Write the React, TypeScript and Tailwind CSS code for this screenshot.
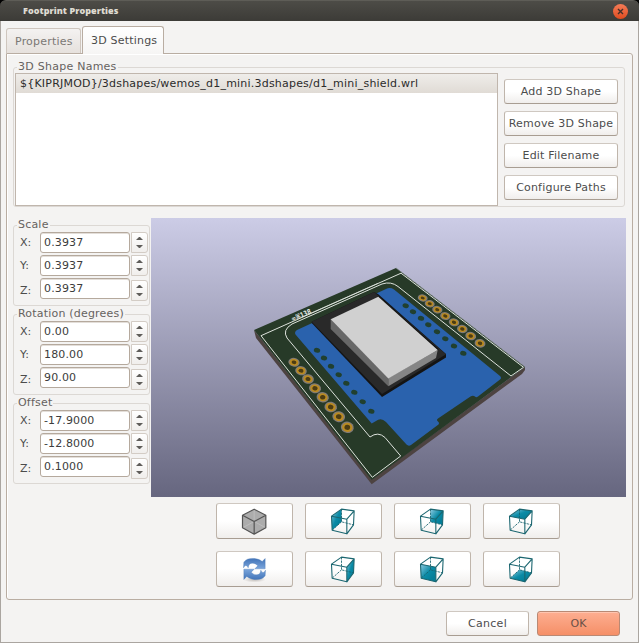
import React from "react";

type Face = "left" | "back" | "top" | "right" | "front" | "bottom";

const faces: Record<Face, string> = {
  left: "-36,-16 -6,-37 -6,1 -34,26",
  back: "-6,-37 32,-32 30,10 -6,1",
  top: "-36,-16 -6,-37 32,-32 10,-7",
  right: "10,-7 32,-32 30,10 10,37",
  front: "-36,-16 10,-7 10,37 -34,26",
  bottom: "-6,1 30,10 10,37 -34,26",
};

function WireCube({ face }: { face: Face }) {
  const id = `fill-${face}`;
  return (
    <svg width="27" height="29" viewBox="-40.5 -43.5 81 87">
      <defs>
        <linearGradient id={id} x1="0" y1="0" x2="0.8" y2="0.8">
          <stop offset="0" stopColor="#8ecbe2" />
          <stop offset="0.6" stopColor="#0b8ba6" />
          <stop offset="1" stopColor="#047e98" />
        </linearGradient>
      </defs>
      <polygon points={faces[face]} fill={`url(#${id})`} />
      <path d="M-6 -37V1L30 10M-6 1L-34 26" fill="none" stroke="#17636e" strokeWidth="2.6" strokeDasharray="7 3" />
      <path
        d="M-36 -16L-6 -37L32 -32L30 10L10 37L-34 26ZM-36 -16L10 -7V37M10 -7L32 -32"
        fill="none"
        stroke="#1b6670"
        strokeWidth="3.3"
        strokeLinejoin="round"
      />
    </svg>
  );
}

function SolidCube() {
  return (
    <svg width="27" height="29" viewBox="-40.5 -43.5 81 87">
      <path d="M-1 -37L34 -19V19L-1 38L-36 19V-19Z" fill="#acacac" />
      <path d="M-1 0L-36 19M-1 0L34 19M-1 -37V0" stroke="#c6c6c6" strokeWidth="2" />
      <path
        d="M-1 -37L34 -19V19L-1 38L-36 19V-19ZM-36 -19L-1 0L34 -19M-1 0V38"
        fill="none"
        stroke="#545454"
        strokeWidth="3.6"
        strokeLinejoin="round"
      />
    </svg>
  );
}

function RefreshIcon() {
  const arrow =
    "M-33 -5L-32 -22C-25 -32 -14 -34 0 -33C11 -32 18 -28 23 -24L32 -33V-2H1L10 -11C2 -20 -9 -21 -15 -16C-18 -12 -18 -9 -19 -5C-21 -10 -24 -12 -26 -12C-29 -12 -31 -8 -33 -5Z";
  return (
    <svg width="27" height="29" viewBox="-40.5 -43.5 81 87">
      <defs>
        <linearGradient id="refresh" x1="0" y1="0" x2="0" y2="1">
          <stop offset="0" stopColor="#4274b8" />
          <stop offset="1" stopColor="#7ba6dc" />
        </linearGradient>
        <radialGradient id="refresh-shadow">
          <stop offset="0" stopColor="#9a938c" stopOpacity="0.6" />
          <stop offset="1" stopColor="#9a938c" stopOpacity="0" />
        </radialGradient>
      </defs>
      <ellipse cx="0" cy="30" rx="34" ry="9" fill="url(#refresh-shadow)" />
      <g fill="url(#refresh)" stroke="#3f70b0" strokeWidth="1" strokeLinejoin="round">
        <path d={arrow} />
        <path d={arrow} transform="rotate(180 0 -1.5)" />
      </g>
    </svg>
  );
}

const leftPads = [[294, 362.3], [301, 370.7], [308, 379], [315, 388.3], [322.7, 397.3], [330.7, 407], [338.7, 416.7], [347.3, 427.3]];
const rightPads = [[422.7, 298], [429.7, 303.7], [437.3, 309.7], [445.3, 316], [454, 322.3], [462.3, 329], [470.7, 336], [480, 343.3]];
const leftHoles = [[317, 350.3], [324, 358], [331, 366.3], [338.7, 374.7], [346.3, 383.3], [354.3, 392.3], [362.7, 401.7], [371.3, 411.3]];
const rightHoles = [[405.7, 305.7], [413, 311.7], [421, 318.3], [428.3, 324.7], [437, 331.7], [445.3, 338.7], [454, 346], [463.3, 353.3]];

function Pad({ x, y, r, ry }: { x: number; y: number; r: number; ry: number }) {
  return (
    <g transform={`translate(${x} ${y}) rotate(12)`}>
      <ellipse rx={r + 1.3} ry={ry + 1.1} fill="#807b78" />
      <ellipse rx={r} ry={ry} fill="#b98a22" />
      <ellipse rx={r * 0.55} ry={ry * 0.56} fill="#4d3c12" />
    </g>
  );
}

function BoardPreview() {
  return (
    <svg className="ml-px block h-[279px] w-[475px]" viewBox="151 218 475 279">
      <defs>
        <linearGradient id="sky" x1="0" y1="0" x2="0" y2="1">
          <stop offset="0" stopColor="#cccce6" />
          <stop offset="1" stopColor="#66667f" />
        </linearGradient>
      </defs>
      <rect x="151" y="218" width="475" height="279" fill="url(#sky)" />
      <path d="M254 330L371.7 479.5L525 367V370L522 374L371.7 484.3L256 338Z" fill="#4d4341" />
      <path d="M254 330L396 268L525 367L371.7 480Z" fill="#273a28" />
      <path d="M396 268L525 367" stroke="#747f79" strokeWidth="1" strokeDasharray="2 1" />
      <path
        d="M297 330L386 289Q390 287 394 289.500L500 376Q502 378 500 379.500L478 396.500Q476 398 475 396.500Q473 395 470.500 396.500L438 418.500Q436 420 438 421.500Q440 423 438.500 424.500L411 445Q408.500 446.500 406.500 444.500L386 422Q381 417 376 421L371.700 423.500L295.500 334.500Q294 332 297 330Z"
        fill="#2a62ad"
      />
      <g fill="none" stroke="#dde2dc" strokeWidth="1">
        <path d="M261 335.700L401 273.200L523.500 367.300L511 376L398 286.500Q391 281 382 284L292 324Q282 330 287 338L370 437Q378 431 385 437.500L400.700 456L372.300 477.300Z" />
        <path d="M308 314.500L378 283.300" strokeWidth="0.7" />
      </g>
      <text
        x="0"
        y="0"
        transform="translate(292.500 321.500) rotate(-23.5)"
        className="font-['DejaVu_Sans'] text-[7px] font-bold"
        fill="#e3e7e2"
        textLength="21"
        lengthAdjust="spacingAndGlyphs"
      >
        ∞⌘138
      </text>
      <path d="M311.700 321.700L374 292L378 294L446 354V357.500L382 397L311.700 323Z" fill="#141414" />
      <path d="M311.700 321.700L374 292L446 354.300L382 394Z" fill="#292929" />
      <path d="M378.300 297L438 350" stroke="#111" strokeWidth="2" />
      <path d="M330.700 319L388.300 378V386.300L330.700 329Z" fill="#686868" />
      <path d="M388.300 378L437.700 350L436 358L388.300 386.300Z" fill="#858585" />
      <path d="M330.700 319.300L378.300 296.700L437.700 350L388.300 378.500Z" fill="#d0d0d0" />
      {[...leftHoles, ...rightHoles].map(([x, y]) => (
        <ellipse key={`${x}-${y}`} cx={x} cy={y} rx="3.200" ry="2.400" transform={`rotate(15 ${x} ${y})`} fill="#21402f" />
      ))}
      {leftPads.map(([x, y], i) => (
        <Pad key={x} x={x} y={y} r={4.4 + i * 0.12} ry={3.3 + i * 0.18} />
      ))}
      {rightPads.map(([x, y], i) => (
        <Pad key={x} x={x} y={y} r={3.7 + i * 0.07} ry={2.5 + i * 0.1} />
      ))}
    </svg>
  );
}

const buttonBase =
  "flex items-center justify-center rounded-[3px] border border-[#bfb5ab] border-t-[#cfc8c1] border-b-[#a89d92] bg-linear-to-b from-white from-50% to-[#f0eeec]";

function PushButton({ label }: { label: string }) {
  return <button className={`${buttonBase} h-[25px] w-full pt-[2px] whitespace-nowrap tracking-[0.2px]`}>{label}</button>;
}

function Spinner() {
  return (
    <div className="ml-px flex h-[21px] w-[17px] flex-col items-center justify-center gap-[5px] rounded-r-[3px] border border-[#d3ccc5] bg-linear-to-b from-white to-[#f0eeec]">
      <svg width="7" height="3" viewBox="0 0 7 3"><path d="M0 3L3.500 -0.500L7 3Z" fill="#5f5d5a" /></svg>
      <svg width="7" height="3" viewBox="0 0 7 3"><path d="M0 0L3.500 3.500L7 0Z" fill="#5f5d5a" /></svg>
    </div>
  );
}

function Axes({ title, values }: { title: string; values: string[] }) {
  return (
    <fieldset className="h-[87px] w-[137px] rounded-[3px] border border-[#dcd8d4]">
      <legend className="ml-[3px] h-[13px] px-px leading-[11px] tracking-[0.2px] whitespace-nowrap text-[#66625f]">{title}</legend>
      <div className="flex flex-col gap-[2px]">
        {values.map((value, i) => (
          <div key={i} className={i === 2 ? "flex h-[23px] items-end" : "flex h-[21px] items-end"}>
            <span className="w-[26px] pl-[6px] leading-[21px]">{"XYZ"[i]}:</span>
            <div className="h-[21px] w-[90px] self-start rounded-[3px] border border-[#b5a99d] bg-white pl-[3px] leading-[19px] tracking-[0.13px] text-[#3c3c3c] shadow-[inset_0_1px_0_#e3ded9]">
              {value}
            </div>
            <Spinner />
          </div>
        ))}
      </div>
    </fieldset>
  );
}

export default function App() {
  return (
    <div className="h-[643px] w-[639px] overflow-hidden bg-black font-['DejaVu_Sans',sans-serif] text-[11px] text-[#4c4c4c]">
      <header className="flex h-[21px] items-center justify-between rounded-t-[6px] border-t border-[#5e5d57] bg-linear-to-b from-[#4d4c47] to-[#3c3b37] pr-[11px] pl-[23px]">
        <h1 className="font-['Open_Sans',sans-serif] text-[9px] leading-[18px] font-extrabold tracking-[0.05px] text-[#dfdbd2]">
          Footprint Properties
        </h1>
        <span className="mt-px flex size-[15px] items-center justify-center rounded-full bg-linear-to-b from-[#f47b56] to-[#df4b1c]">
          <svg width="7" height="7" viewBox="0 0 7 7"><path d="M1 1L6 6M6 1L1 6" stroke="#43302a" strokeWidth="1.400" /></svg>
        </span>
      </header>
      <main className="h-[622px] border border-t-0 border-[#aaa5a0] bg-[#f4f3f2] pl-[5px]">
        <nav className="flex h-8 items-end">
          <div className="h-[25px] w-[75px] rounded-t-[3px] border border-b-0 border-[#cfc6be] bg-linear-to-b from-[#f4f2f1] to-[#e6e1dd] pl-2 leading-[25px] tracking-[0.2px] text-[#7b7875]">
            Properties
          </div>
          <div className="z-10 -mb-px ml-px h-[28px] w-[82px] rounded-t-[3px] border border-b-0 border-[#b9ada2] bg-linear-to-b from-white to-[#f6f5f4] pl-2 leading-[27px] tracking-[0.2px] whitespace-nowrap">
            3D Settings
          </div>
        </nav>
        <section className="h-[547px] w-[627px] rounded-[3px] rounded-tl-none border border-[#b9ada2] pt-[7px] pl-[6px] shadow-[inset_1px_1px_0_#fff]">
          <fieldset className="h-[146px] w-[612px] rounded-[3px] border border-[#dcd8d4]">
            <legend className="ml-[3px] h-[13px] px-px leading-[11px] tracking-[0.25px] text-[#66625f]">3D Shape Names</legend>
            <div className="-mt-px ml-px flex">
              <div className="h-[133px] w-[483px] border border-[#c0b6ad] bg-white">
                <div className="h-[19px] bg-linear-to-b from-[#efedea] to-[#e0dbd5] pl-1 leading-[19px] tracking-[0.21px] whitespace-nowrap text-[#2b2b2b]">
                  {"${KIPRJMOD}/3dshapes/wemos_d1_mini.3dshapes/d1_mini_shield.wrl"}
                </div>
              </div>
              <div className="mt-[6px] ml-[6px] flex w-[114px] flex-col gap-[7px]">
                <PushButton label="Add 3D Shape" />
                <PushButton label="Remove 3D Shape" />
                <PushButton label="Edit Filename" />
                <PushButton label="Configure Paths" />
              </div>
            </div>
          </fieldset>
          <div className="mt-[11px] flex">
            <div className="flex flex-col gap-[2px] pt-px">
              <Axes title="Scale" values={["0.3937", "0.3937", "0.3937"]} />
              <Axes title="Rotation (degrees)" values={["0.00", "180.00", "90.00"]} />
              <Axes title="Offset" values={["-17.9000", "-12.8000", "0.1000"]} />
            </div>
            <BoardPreview />
          </div>
          <div className="mt-[6px] ml-[203px] grid w-[344px] grid-cols-4 gap-3">
            {[
              <SolidCube />,
              <WireCube face="left" />,
              <WireCube face="back" />,
              <WireCube face="top" />,
              <RefreshIcon />,
              <WireCube face="right" />,
              <WireCube face="front" />,
              <WireCube face="bottom" />,
            ].map((icon, i) => (
              <button key={i} className={`${buttonBase} h-9`}>{icon}</button>
            ))}
          </div>
        </section>
        <footer className="mt-[11px] flex justify-end gap-2 pr-[18px]">
          <button className={`${buttonBase} h-[25px] w-[83px] pt-[2px] tracking-[0.3px]`}>Cancel</button>
          <button className="h-[25px] w-[83px] rounded-[3px] border border-[#b98974] bg-linear-to-b from-[#fdae91] to-[#f58f67] leading-[23px] text-[#6a5047] shadow-[inset_0_1px_0_#ffc5b0]">
            OK
          </button>
        </footer>
      </main>
    </div>
  );
}
